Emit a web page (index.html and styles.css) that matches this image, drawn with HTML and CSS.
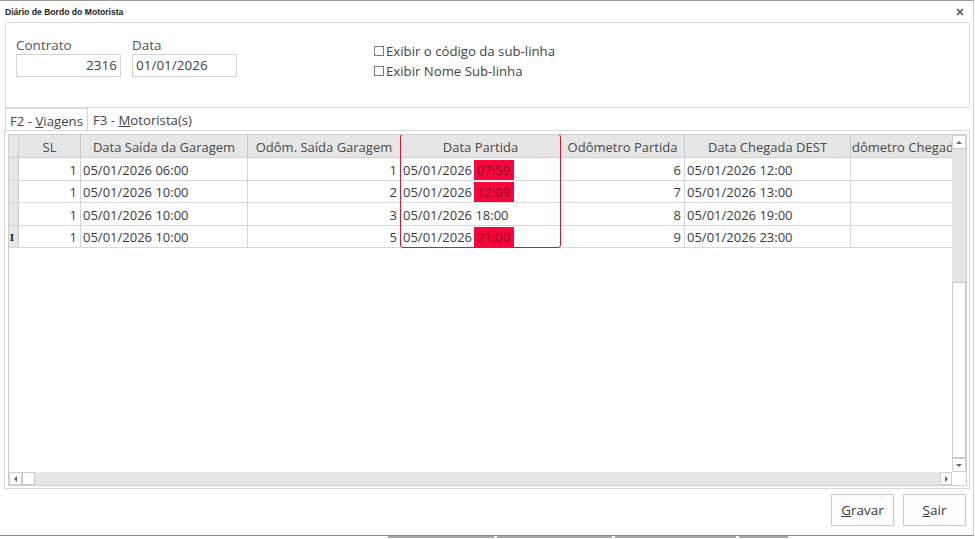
FILE: index.html
```html
<!DOCTYPE html>
<html lang="pt-BR">
<head>
  <meta charset="UTF-8" />
  <title>Diário de Bordo do Motorista</title>
  <link rel="stylesheet" href="styles.css">
</head>
<body>

  <div class="window">
    <div class="titlebar">
      <span class="title">Diário de Bordo do Motorista</span>
      <svg class="close" width="8" height="8" viewBox="0 0 8 8"><path d="M1 1 L7 7 M7 1 L1 7" stroke="#555" stroke-width="1.6"/></svg>
    </div>

    <div class="filters">
      <div class="field">
        <label>Contrato</label>
        <div class="input num">2316</div>
      </div>
      <div class="field">
        <label>Data</label>
        <div class="input">01/01/2026</div>
      </div>
      <div class="checks">
        <div class="check"><span class="box"></span>Exibir o código da sub-linha</div>
        <div class="check"><span class="box"></span>Exibir Nome Sub-linha</div>
      </div>
    </div>

    <div class="tabs">
      <div class="tab active">F2 - <u>V</u>iagens</div>
      <div class="tab">F3 - <u>M</u>otorista(s)</div>
    </div>

    <div class="tab-page">
      <div class="grid">
        <div class="grid-main">
          <div class="table">
            <div class="c h ind"></div>
            <div class="c h">SL</div>
            <div class="c h">Data Saída da Garagem</div>
            <div class="c h">Odôm. Saída Garagem</div>
            <div class="c h">Data Partida</div>
            <div class="c h">Odômetro Partida</div>
            <div class="c h">Data Chegada DEST</div>
            <div class="c h last">Odômetro Chegada</div>

            <div class="c ind"></div>
            <div class="c r">1</div>
            <div class="c">05/01/2026 06:00</div>
            <div class="c r">1</div>
            <div class="c">05/01/2026<span class="late">07:59</span></div>
            <div class="c r">6</div>
            <div class="c">05/01/2026 12:00</div>
            <div class="c last"></div>

            <div class="c ind"></div>
            <div class="c r">1</div>
            <div class="c">05/01/2026 10:00</div>
            <div class="c r">2</div>
            <div class="c">05/01/2026<span class="late">12:09</span></div>
            <div class="c r">7</div>
            <div class="c">05/01/2026 13:00</div>
            <div class="c last"></div>

            <div class="c ind"></div>
            <div class="c r">1</div>
            <div class="c">05/01/2026 10:00</div>
            <div class="c r">3</div>
            <div class="c">05/01/2026 18:00</div>
            <div class="c r">8</div>
            <div class="c">05/01/2026 19:00</div>
            <div class="c last"></div>

            <div class="c ind cur">I</div>
            <div class="c r">1</div>
            <div class="c">05/01/2026 10:00</div>
            <div class="c r">5</div>
            <div class="c">05/01/2026<span class="late">21:00</span></div>
            <div class="c r">9</div>
            <div class="c">05/01/2026 23:00</div>
            <div class="c last"></div>

            <div class="col-mark"></div>
          </div>
          <div class="vscroll">
            <div class="arrow up"></div>
            <div class="track"></div>
            <div class="thumb"></div>
            <div class="arrow down"></div>
          </div>
        </div>
        <div class="hscroll">
          <div class="arrow left"></div>
          <div class="thumb"></div>
          <div class="track"></div>
          <div class="arrow right"></div>
          <div class="corner"></div>
        </div>
      </div>
    </div>

    <div class="footer">
      <button><u>G</u>ravar</button>
      <button><u>S</u>air</button>
    </div>
  </div>

  <div class="taskbar">
    <span style="width:106px"></span>
    <span style="width:115px"></span>
    <span style="width:121px"></span>
    <span style="width:49px"></span>
  </div>

</body>
</html>
```

FILE: styles.css
```css
* { box-sizing: border-box; margin: 0; padding: 0; }
body {
  width: 975px;
  height: 539px;
  overflow: hidden;
  background: #fff;
  font-family: "Open Sans", sans-serif;
  font-size: 13px;
  color: #3a3a3a;
}

.window {
  width: 974px;
  height: 536px;
  border-top: 1px solid #9c9c9c;
  border-right: 1px solid #cfcfcf;
  border-bottom: 1px solid #8a8a8a;
  display: flex;
  flex-direction: column;
}

/* title */
.titlebar {
  height: 21px;
  display: flex;
  align-items: center;
  justify-content: space-between;
  padding: 0 9px 0 5px;
}
.title { font-family: "Liberation Sans", sans-serif; font-weight: bold; font-size: 8.6px; color: #222; }
.close { margin-top: 1px; }

/* filtros */
.filters {
  height: 86px;
  width: 965px;
  margin-left: 5px;
  border: 1px solid #dcdcdc;
  display: flex;
  padding: 13px 0 0 10px;
}
.field { width: 105px; margin-right: 11px; }
.field:nth-child(2) { margin-right: 0; }
.field label { display: block; font-size: 13.5px; line-height: 18px; color: #555; }
.input {
  height: 23px;
  border: 1px solid #d4d4d4;
  font-size: 13.5px;
  line-height: 21px;
  padding: 0 3px;
  color: #444;
}
.input.num { text-align: right; }
.checks { margin: 5px 0 0 136px; }
.check { display: flex; align-items: center; height: 20px; font-size: 13.2px; color: #444; white-space: nowrap; }
.check .box { width: 10px; height: 10px; border: 1px solid #7a7a7a; margin: 0 2px 0 1px; }

/* abas */
.tabs { height: 22px; display: flex; }
.tab {
  height: 22px;
  padding: 3px 0 0 5px;
  font-size: 13.2px;
  line-height: 18px;
  color: #444;
  white-space: nowrap;
}
.tab.active {
  margin-left: 5px;
  width: 83px;
  padding-left: 4px;
  border: 1px solid #d6d6d6;
  border-bottom: none;
}

.tab-page {
  height: 359px;
  width: 966px;
  margin-left: 4px;
  border: 1px solid #d6d6d6;
  padding: 3px 2px 2px 3px;
}

/* grade */
.grid {
  height: 352px;
  border: 1px solid #d0d0d0;
  display: flex;
  flex-direction: column;
}
.grid-main { height: 337px; display: flex; }
.table {
  width: 943px;
  display: grid;
  grid-template-columns: 10px 62px 167px 153px 160px 124px 166px 101px;
  grid-template-rows: 23px 23px 22px 23px 22px;
  align-content: start;
  position: relative;
  overflow: hidden;
}
.c {
  display: flex;
  align-items: center;
  padding: 1px 2px 0;
  white-space: nowrap;
  overflow: hidden;
  border-right: 1px solid #d4d4d4;
  border-bottom: 1px solid #d8d8d8;
}
.c.r { justify-content: flex-end; padding-right: 3px; }
.c.h { justify-content: center; background: #e6e6e6; color: #4a4a4a; border-right-color: #cacaca; border-bottom-color: #d0d0d0; }
.c.last { border-right: none; }
.c.ind { background: #e6e6e6; border-right-color: #cfcfcf; }
.c.cur { font-family: "Liberation Serif", serif; font-weight: bold; font-size: 10px; color: #111; padding-left: 1px; }
.late {
  display: flex;
  align-items: center;
  height: 20px;
  width: 40px;
  margin-left: 2px;
  padding-left: 3px;
  background: #f5073d;
  color: #8e0a22;
}
.col-mark {
  position: absolute;
  left: 391px;
  top: -1px;
  width: 161px;
  height: 114px;
  border: 1.5px solid #e3122f;
  border-radius: 3px;
}

/* barras de rolagem */
.vscroll { width: 14px; display: flex; flex-direction: column; }
.vscroll .track { height: 133px; background: #e3e3e3; }
.vscroll .thumb { height: 176px; background: #fff; border: 1px solid #c9c9c9; }
.arrow {
  width: 14px;
  height: 14px;
  background: #fff;
  border: 1px solid #cfcfcf;
  display: flex;
  align-items: center;
  justify-content: center;
}
.arrow::after { content: ""; border: 3px solid transparent; }
.arrow.up::after { border-bottom-color: #666; margin-top: -3px; }
.arrow.down::after { border-top-color: #666; margin-top: 3px; }
.hscroll { height: 13px; display: flex; background: #e6e6e6; }
.hscroll .arrow { width: 13px; height: 13px; }
.arrow.left::after { border-right-color: #666; margin-left: -3px; }
.hscroll .arrow.right { width: 12px; }
.arrow.right::after { border-left-color: #666; margin-left: 3px; }
.hscroll .thumb { width: 13px; background: #fff; border: 1px solid #c9c9c9; }
.hscroll .track { flex: 1; }
.corner { width: 14px; background: #fff; }

/* rodapé */
.footer {
  height: 46px;
  display: flex;
  justify-content: flex-end;
  gap: 9px;
  padding: 5px 7px 0 0;
}
.footer button {
  width: 63px;
  height: 32px;
  background: #fdfdfd;
  border: 1px solid #c8c8c8;
  font-family: "Open Sans", sans-serif;
  font-size: 13.5px;
  color: #3a3a3a;
}

.taskbar { height: 3px; display: flex; gap: 3px; padding-left: 388px; }
.taskbar span { background: #a8a8a8; height: 2px; }
```
